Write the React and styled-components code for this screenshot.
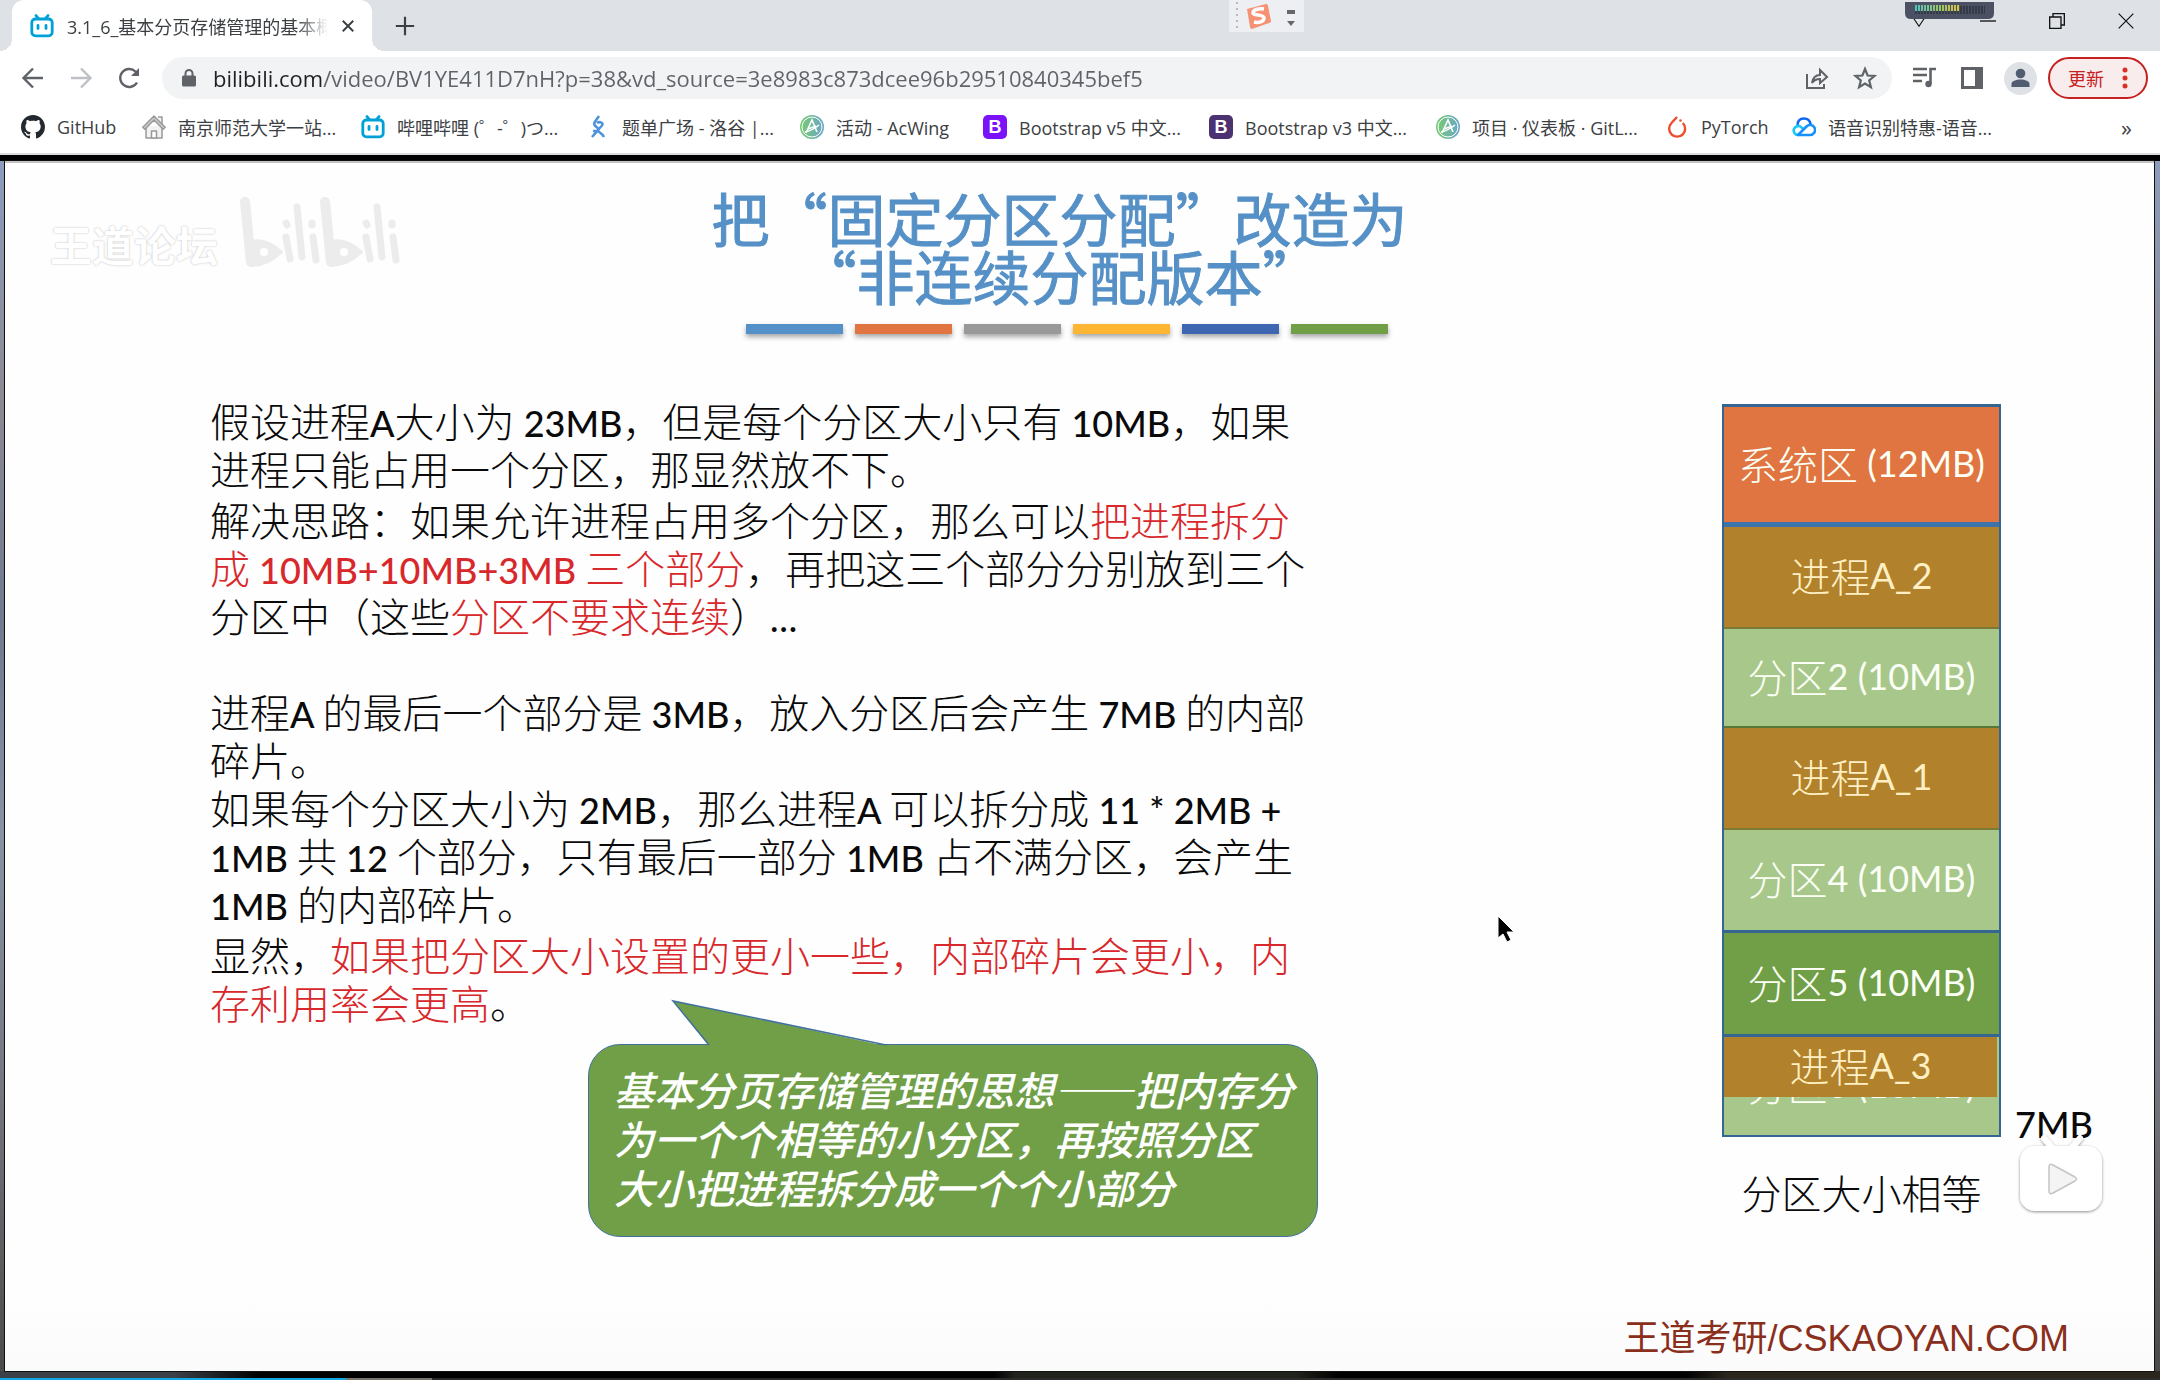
import React from "react";
import styled, { createGlobalStyle } from "styled-components";

const GlobalStyle = createGlobalStyle`
  *, *::before, *::after { box-sizing: border-box; }
  body { margin: 0; background: #000; }
  button { border: 0; padding: 0; background: none; color: inherit; font: inherit; cursor: pointer; }
`;

const uiFont = `"Open Sans", "Noto Sans CJK SC", sans-serif`;
const slideFont = `"Noto Sans CJK SC", sans-serif`;

const Page = styled.div`
  min-height: 100vh;
  display: flex;
  flex-direction: column;
  font-family: ${uiFont};
  font-size: 18px;
  color: #3c4043;
`;

/* ---------- tab strip ---------- */

const TabStrip = styled.header`
  position: relative;
  display: flex;
  align-items: stretch;
  height: 51px;
  padding-left: 12px;
  background: #dee1e6;
`;

const Tab = styled.div`
  position: relative;
  display: flex;
  align-items: center;
  width: 360px;
  padding: 0 12px 0 18px;
  background: #fff;
  border-radius: 12px 12px 0 0;
  &::before, &::after {
    content: "";
    position: absolute;
    bottom: 0;
    width: 12px;
    height: 12px;
  }
  &::before { left: -12px; background: radial-gradient(circle at 0 0, transparent 12px, #fff 12px); }
  &::after { right: -12px; background: radial-gradient(circle at 100% 0, transparent 12px, #fff 12px); }
`;

const TabTitle = styled.span`
  flex: 1;
  margin: 0 8px 0 13px;
  overflow: hidden;
  white-space: nowrap;
  mask-image: linear-gradient(90deg, #000 88%, transparent);
`;

const IconButton = styled.button`
  display: flex;
  align-items: center;
  justify-content: center;
  width: ${(p) => p.$w || 48}px;
  height: 100%;
  color: ${(p) => p.$color || "#5f6368"};
`;

const NewTab = styled(IconButton)`
  margin-left: 9px;
`;

const WindowButtons = styled.div`
  display: flex;
  height: 42px;
  margin-left: auto;
`;

const ImeBar = styled.div`
  position: absolute;
  top: 0;
  left: 1229px;
  display: flex;
  align-items: center;
  width: 75px;
  height: 32px;
  background: #eeeff3;
`;

const Meter = styled.div`
  position: absolute;
  top: 0;
  right: 166px;
  height: 16px;
`;

/* ---------- toolbar ---------- */

const Toolbar = styled.div`
  display: flex;
  align-items: center;
  height: 54px;
  padding: 0 12px 0 9px;
  background: #fff;
`;

const AddressBar = styled.label`
  flex: 1;
  display: flex;
  align-items: center;
  height: 42px;
  margin: 0 8px 0 9px;
  padding: 0 3px 0 20px;
  background: #f1f3f4;
  border-radius: 21px;
`;

const AddressInput = styled.input`
  flex: 1;
  min-width: 0;
  margin-left: 17px;
  padding: 0;
  border: 0;
  outline: 0;
  font: 22px/32px ${uiFont};
  color: #5f6368;
  background: linear-gradient(90deg, #202124 110px, #5f6368 110px);
  background-clip: text;
  -webkit-background-clip: text;
  -webkit-text-fill-color: transparent;
`;

const Update = styled.button`
  display: flex;
  align-items: center;
  justify-content: space-between;
  width: 100px;
  height: 42px;
  margin-left: 4px;
  padding: 0 18px;
  border: 2px solid #c5221f;
  border-radius: 21px;
  background: #f9ecec;
  color: #c5221f;
`;

/* ---------- bookmarks ---------- */

const Bookmarks = styled.nav`
  display: flex;
  align-items: center;
  height: 50px;
  padding: 0 28px 4px 21px;
  background: #fff;
  border-bottom: 2px solid #dadce0;
`;

const Bookmark = styled.a`
  display: flex;
  align-items: center;
  flex: none;
  gap: 12px;
  width: ${(p) => p.$w}px;
  color: #3c4043;
  text-decoration: none;
  white-space: nowrap;
`;

const More = styled.button`
  margin-left: auto;
  font-size: 22px;
  line-height: 24px;
`;

/* ---------- video ---------- */

const Video = styled.main`
  flex: 1;
  display: flex;
  flex-direction: column;
  padding: 6px 6px 0 5px;
  background:
    linear-gradient(#000, #000) top / 100% 6px no-repeat,
    linear-gradient(90deg, #3c4148 0 8%, #000 12% 46%, #20221c 47% 60%, #000 62% 78%, #2b261d 80%) bottom / 100% 9px no-repeat,
    linear-gradient(#8c9dbd, #8b8a92 20%, #707a90 38%, #8793a3 55%, #777982 75%, #4a4a48) 0 0 / 100% 100% no-repeat;
`;

const Slide = styled.section`
  flex: 1;
  display: flex;
  flex-direction: column;
  padding: 25px 85px 12px 45px;
  border-top: 2px solid #c4c4c4;
  background: linear-gradient(#fefefe 94%, #fbfbfc);
  box-shadow: 0 0 0 1px #111;
  font-family: ${slideFont};
  font-size: 40px;
  font-weight: 300;
  line-height: 48px;
  color: #0a0a0a;
`;

const Progress = styled.div`
  height: 9px;
  border-top: 7px solid transparent;
  margin: 0 -6px 0 -5px;
  background: linear-gradient(90deg, #12a8e4 16%, #77746f 16% 20%, #2b2b2b 20%) padding-box;
`;

const SlideHead = styled.div`
  display: grid;
  grid-template-columns: 1fr auto 1fr;
`;

const Watermark = styled.div`
  display: flex;
  align-items: flex-end;
  gap: 20px;
  height: 80px;
  color: #fff;
  font-size: 42px;
  font-weight: 700;
  text-shadow: 0 0 2px #b4b4b4;
`;

const Title = styled.h1`
  margin: 0;
  font-size: 58px;
  font-weight: 400;
  line-height: 58px;
  text-align: center;
  color: #5590c6;
  -webkit-text-stroke: 1px #5590c6;
`;

const Bars = styled.div`
  display: grid;
  grid-template-columns: repeat(6, 1fr);
  gap: 12px;
  margin: 20px 20px 0 35px;
`;

const Bar = styled.span`
  height: 10px;
  background: ${(p) => p.$color};
  box-shadow: 0 3px 5px rgba(0, 0, 0, 0.35);
`;

const SlideBody = styled.div`
  display: flex;
  justify-content: space-between;
  margin: 62px -20px 0 160px;
`;

const Prose = styled.div`
  white-space: nowrap;
`;

const Para = styled.p`
  margin: ${(p) => p.$gap || 0}px 0 0;
`;

const Mark = styled.em`
  font-style: normal;
  color: #d8282b;
`;

const Latin = styled.span`
  font-family: Lato, ${slideFont};
  font-size: 36px;
  font-weight: ${(p) => p.$weight || 500};
  line-height: 36px;
  white-space: pre;
`;

const Callout = styled.aside`
  position: relative;
  width: 730px;
  margin: 18px 0 0 378px;
  padding: 20px 25px 24px;
  border: 1px solid #41719c;
  border-radius: 32px;
  background: #709f47;
  color: #fff;
  font-style: italic;
  font-weight: 500;
  line-height: 49px;
`;

const Tail = styled.svg`
  position: absolute;
  left: 82px;
  top: -46px;
`;

const Memory = styled.div`
  display: flex;
  align-items: flex-start;
  gap: 14px;
  padding-top: 8px;
`;

const Figure = styled.figure`
  width: 279px;
  margin: 0;
  text-align: center;
`;

const Stack = styled.div`
  border: 2px solid #356691;
  border-top-width: 3px;
`;

const Block = styled.div`
  position: relative;
  display: flex;
  align-items: center;
  justify-content: center;
  height: ${(p) => p.$h}px;
  padding-bottom: 4px;
  border-bottom: ${(p) => p.$line || 2}px solid ${(p) => p.$edge || "#356691"};
  background: ${(p) => p.$fill};
  color: ${(p) => p.$ink || "#fbfff5"};
  white-space: pre;
  &:last-child { border-bottom: 0; }
`;

const Cover = styled(Block)`
  position: absolute;
  inset: 0 2px auto 0;
`;

const Caption = styled.figcaption`
  padding-top: 31px;
`;

const Free = styled.div`
  width: 74px;
  padding-top: 693px;
`;

const Credit = styled.footer`
  margin-top: auto;
  font: 36px/40px "Liberation Sans", "Noto Sans CJK SC", sans-serif;
  text-align: right;
  color: #8a2f1c;
`;

const PlayBadge = styled.button`
  position: absolute;
  right: 53px;
  bottom: 159px;
`;

const Pointer = styled.svg`
  position: absolute;
  left: 1497px;
  top: 915px;
`;

/* ---------- drawings ---------- */

const BiliIcon = () => (
  <svg width="24" height="24" viewBox="0 0 24 24" fill="none" stroke="#00a1d6" strokeWidth="2.8" strokeLinecap="round" aria-hidden="true">
    <rect x="1.8" y="5" width="20.4" height="16.8" rx="3.6" />
    <path d="M6 1.6 8.4 4.4M18 1.6 15.6 4.4M8 11.5v3M16 11.5v3" />
  </svg>
);

const GithubIcon = () => (
  <svg width="24" height="24" viewBox="0 0 16 16" fill="#24292f" aria-hidden="true">
    <path d="M8 0C3.58 0 0 3.58 0 8c0 3.54 2.29 6.53 5.47 7.59.4.07.55-.17.55-.38 0-.19-.01-.82-.01-1.49-2.01.37-2.53-.49-2.69-.94-.09-.23-.48-.94-.82-1.13-.28-.15-.68-.52-.01-.53.63-.01 1.08.58 1.23.82.72 1.21 1.87.87 2.33.66.07-.52.28-.87.51-1.07-1.78-.2-3.64-.89-3.64-3.95 0-.87.31-1.59.82-2.15-.08-.2-.36-1.02.08-2.12 0 0 .67-.21 2.2.82.64-.18 1.32-.27 2-.27s1.36.09 2 .27c1.53-1.04 2.2-.82 2.2-.82.44 1.1.16 1.92.08 2.12.51.56.82 1.27.82 2.15 0 3.07-1.87 3.75-3.65 3.95.29.25.54.73.54 1.48 0 1.07-.01 1.93-.01 2.2 0 .21.15.46.55.38A8.01 8.01 0 0 0 16 8c0-4.42-3.58-8-8-8z" />
  </svg>
);

const HomeIcon = () => (
  <svg width="24" height="24" viewBox="0 0 24 24" fill="#f2f2f2" stroke="#999" strokeWidth="1.5" strokeLinejoin="round" aria-hidden="true">
    <path d="M16 2h4v7M4 11v12h16V11" />
    <path d="M12 1 .8 12.2l2 2L12 5l9.200 9.200 2-2z" fill="#ccc" />
    <path d="M9.500 23v-7h5v7z" fill="#fff" />
  </svg>
);

const LuoguIcon = () => (
  <svg width="22" height="24" viewBox="0 0 22 24" fill="none" stroke="#4f94dc" strokeWidth="2.600" aria-hidden="true">
    <path d="M11 1 6.500 7.500c-1 2 0 3 2 4.500 2.500 2 2 3 0 5L4 22M9 8c3-2 7 0 5 2.500L10 15c1 4 4 2 6 7M5 16h6" />
  </svg>
);

const AcwingIcon = ({ id }) => (
  <svg width="24" height="24" viewBox="0 0 24 24" aria-hidden="true">
    <defs>
      <linearGradient id={id}><stop stopColor="#77cc70" /><stop offset="1" stopColor="#6ba5cb" /></linearGradient>
    </defs>
    <circle cx="12" cy="12" r="12" fill={`url(#${id})`} />
    <circle cx="12" cy="12" r="10" fill="none" stroke="#fff" />
    <path d="m6 18 6-13 5 12M8 14l8-3M5 17c5-1 9-3 14-7" fill="none" stroke="#fff" strokeWidth="1.600" />
  </svg>
);

const BootBadge = styled.span`
  display: grid;
  place-items: center;
  width: 24px;
  height: 24px;
  border-radius: 5px;
  background: ${(p) => p.$color};
  color: #fff;
  font: 700 18px/24px "Liberation Sans", sans-serif;
`;

const TorchIcon = () => (
  <svg width="24" height="24" viewBox="0 0 24 24" fill="none" stroke="#ee4c2c" strokeWidth="2.400" aria-hidden="true">
    <path d="M12 2 6.500 8a8 8 0 1 0 11.300 0" />
    <circle cx="15.500" cy="5.500" r="1.300" fill="#ee4c2c" stroke="none" />
  </svg>
);

const CloudIcon = () => (
  <svg width="24" height="24" viewBox="0 0 24 24" fill="none" strokeWidth="2.600" strokeLinecap="round" aria-hidden="true">
    <path d="M5.500 11C5 6 8 3.500 12 3.500S18 6 18.500 9" stroke="#0a68f5" />
    <path d="M6 20a4.500 4.500 0 1 1 3-8l2.500 2" stroke="#19c8f0" />
    <path d="M6 20h12a5 5 0 1 0-3.500-8.500z" stroke="#1690fb" strokeLinejoin="round" />
  </svg>
);

const BiliLogo = () => (
  <svg width="166" height="72" viewBox="0 0 166 72" fill="none" stroke="#ececec" strokeLinecap="round" aria-label="bilibili">
    {[0, 80].map((x) => (
      <g key={x} transform={`translate(${x} 0)`}>
        <path d="m7 6 6 60" strokeWidth="10" />
        <path d="M12 45c14-3 24 3 32 11-8 8-18 14-32 14z" fill="#ececec" strokeWidth="2" />
        <circle cx="26" cy="56" r="4" fill="#fefefe" stroke="none" />
        <path d="m48 27 1 2m-1 12 4 22m7-52 5 50m10-34v2m1 12 3 23" strokeWidth="7" />
      </g>
    ))}
  </svg>
);

const Glyph = ({ size = 24, width = 2.4, children, ...rest }) => (
  <svg width={size} height={size} viewBox="0 0 24 24" fill="none" stroke="currentColor" strokeWidth={width} aria-hidden="true" {...rest}>
    {children}
  </svg>
);

const bookmarks = [
  { label: "GitHub", w: 121, icon: <GithubIcon /> },
  { label: "南京师范大学一站...", w: 219, icon: <HomeIcon /> },
  { label: "哔哩哔哩 (゜-゜)つ...", w: 227, icon: <BiliIcon /> },
  { label: "题单广场 - 洛谷 |...", w: 212, icon: <LuoguIcon /> },
  { label: "活动 - AcWing", w: 183, icon: <AcwingIcon id="ac1" /> },
  { label: "Bootstrap v5 中文...", w: 226, icon: <BootBadge $color="#7a12fa">B</BootBadge> },
  { label: "Bootstrap v3 中文...", w: 227, icon: <BootBadge $color="#4c3271">B</BootBadge> },
  { label: "项目 · 仪表板 · GitL...", w: 229, icon: <AcwingIcon id="ac2" /> },
  { label: "PyTorch", w: 127, icon: <TorchIcon /> },
  { label: "语音识别特惠-语音...", w: 210, icon: <CloudIcon /> },
];

const barColors = ["#5591c9", "#e07541", "#999999", "#fdb634", "#3f66b1", "#709f47"];

/* Latin runs are set in a second face, a little smaller than the Chinese text. */
const mix = (text, weight) =>
  text.split(/([A-Za-z0-9()_+*… ]+)/).map((run, i) =>
    i % 2 ? <Latin key={i} $weight={weight}>{run}</Latin> : run
  );

const brown = "#b1812b";
const pale = "#a8c78a";

export default function App() {
  return (
    <Page lang="zh-CN">
      <GlobalStyle />
      <TabStrip>
        <Tab>
          <BiliIcon />
          <TabTitle>3.1_6_基本分页存储管理的基本概念</TabTitle>
          <IconButton $w={24} $color="#3c4043" aria-label="关闭标签页">
            <Glyph size={18} width={2.6}><path d="m5 5 14 14M19 5 5 19" /></Glyph>
          </IconButton>
        </Tab>
        <NewTab $color="#3c4043" aria-label="新标签页">
          <Glyph size={22}><path d="M12 2v20M2 12h20" /></Glyph>
        </NewTab>
        <WindowButtons>
          <IconButton $w={69} $color="#111" aria-label="搜索标签页"><Glyph size={16} width={1.6}><path d="m2 5 10 15L22 5z" /></Glyph></IconButton>
          <IconButton $w={69} $color="#111" aria-label="最小化"><Glyph size={16} width={2}><path d="M0 12h24" /></Glyph></IconButton>
          <IconButton $w={69} $color="#111" aria-label="还原"><Glyph size={16} width={2}><path d="M1 6h17v17H1zM6 6V1h17v17h-5" /></Glyph></IconButton>
          <IconButton $w={69} $color="#111" aria-label="关闭"><Glyph size={16} width={1.8}><path d="m1 1 22 22M23 1 1 23" /></Glyph></IconButton>
        </WindowButtons>
        <ImeBar>
          <svg width="75" height="32" viewBox="0 0 75 32" aria-hidden="true">
            <path d="M8 2v30" stroke="#b9bbc0" strokeWidth="2" strokeDasharray="2 4" />
            <path d="m18 9 19-5q2 0 2 2l3 15q0 2-2 2l-17 6q-2 0-2-2L18 9z" fill="#f59274" />
            <path d="M35 9c-6-1-11 1-11 4s11 1 11 5-6 5-10 4" fill="none" stroke="#fff" strokeWidth="3.500" />
            <path d="M58 10h8v4h-8zM58 21h8l-4 5z" fill="#66686c" />
          </svg>
        </ImeBar>
        <Meter>
          <svg width="89" height="17" viewBox="0 0 89 17" aria-hidden="true">
            <defs>
              <linearGradient id="level"><stop stopColor="#4fc3c0" /><stop offset=".5" stopColor="#8fc66c" /><stop offset="1" stopColor="#e0c23e" /></linearGradient>
            </defs>
            <path d="M0 0h89v11q0 6-6 6H6q-6 0-6-6z" fill="#4b5163" />
            <path d="M10 8h70" stroke="#343a48" strokeWidth="8" strokeDasharray="2 1" />
            <rect x="10" y="3" width="45" height="6" fill="url(#level)" />
            <path d="M12 6h43" stroke="#4b5163" strokeWidth="6" strokeDasharray="1 2" />
          </svg>
        </Meter>
      </TabStrip>

      <Toolbar>
        <IconButton aria-label="后退"><Glyph><path d="M22 12H3M12 2.500 2.500 12l9.500 9.500" /></Glyph></IconButton>
        <IconButton $color="#bdc1c6" aria-label="前进"><Glyph><path d="M2 12h19M12 2.500l9.500 9.500-9.500 9.500" /></Glyph></IconButton>
        <IconButton aria-label="重新加载">
          <Glyph><path d="M20 16.500a9 9 0 1 1-1.500-11L21 8" /><path d="M22 2v8h-8z" fill="currentColor" stroke="none" /></Glyph>
        </IconButton>
        <AddressBar>
          <svg width="14" height="18" viewBox="0 0 14 18" aria-hidden="true">
            <path d="M3.500 7V4.500a3.500 3.500 0 0 1 7 0V7" fill="none" stroke="#5f6368" strokeWidth="2" />
            <rect y="6.500" width="14" height="11" rx="1.500" fill="#5f6368" />
          </svg>
          <AddressInput aria-label="地址" defaultValue="bilibili.com/video/BV1YE411D7nH?p=38&vd_source=3e8983c873dcee96b29510840345bef5" />
          <IconButton aria-label="分享"><Glyph width={2}><path d="M2 8v14h17v-4M7 17c1-6 4-8 8-8V4l7 7-7 6v-4c-4 0-6 1-8 4z" /></Glyph></IconButton>
          <IconButton aria-label="收藏"><Glyph width={2.2}><path d="m12 3 2.600 6.500 6.900.500-5.300 4.400 1.700 6.800L12 17.500l-5.900 3.700 1.700-6.800L2.500 10l6.900-.500z" /></Glyph></IconButton>
        </AddressBar>
        <IconButton aria-label="媒体控件">
          <Glyph width={2.6}><path d="M1 3h14M1 9h14M1 15h9M18.500 18V3H24" /><circle cx="16.500" cy="18" r="3.200" fill="currentColor" stroke="none" /></Glyph>
        </IconButton>
        <IconButton aria-label="侧边栏">
          <Glyph width={3}><path d="M2.500 2.500h19v19h-19z" /><path d="M15 2h7v20h-7z" fill="currentColor" stroke="none" /></Glyph>
        </IconButton>
        <IconButton aria-label="用户">
          <svg width="33" height="33" viewBox="0 0 33 33" aria-hidden="true">
            <circle cx="16.500" cy="16.500" r="16.500" fill="#dee1e6" />
            <circle cx="16.500" cy="11.500" r="4.800" fill="#515c70" />
            <path d="M7.500 25v-3c0-6 18-6 18 0v3z" fill="#515c70" />
          </svg>
        </IconButton>
        <Update>
          更新
          <svg width="6" height="22" viewBox="0 0 6 22" fill="#d93025" aria-hidden="true">
            <circle cx="3" cy="3" r="2.500" /><circle cx="3" cy="11" r="2.500" /><circle cx="3" cy="19" r="2.500" />
          </svg>
        </Update>
      </Toolbar>

      <Bookmarks>
        {bookmarks.map((b) => (
          <Bookmark key={b.label} href="#" $w={b.w}>{b.icon}{b.label}</Bookmark>
        ))}
        <More aria-label="更多书签">»</More>
      </Bookmarks>

      <Video>
        <Slide>
          <SlideHead>
            <Watermark>
              王道论坛
              <BiliLogo />
            </Watermark>
            <div>
              <Title>把“固定分区分配”改造为<br />“非连续分配版本”</Title>
              <Bars>{barColors.map((c) => <Bar key={c} $color={c} />)}</Bars>
            </div>
          </SlideHead>

          <SlideBody>
            <Prose>
              <Para>
                {mix("假设进程A大小为 23MB，但是每个分区大小只有 10MB，如果")}<br />
                进程只能占用一个分区，那显然放不下。
              </Para>
              <Para $gap={3}>
                解决思路：如果允许进程占用多个分区，那么可以<Mark>把进程拆分<br />
                {mix("成 10MB+10MB+3MB 三个部分")}</Mark>，再把这三个部分分别放到三个<br />
                分区中（这些<Mark>分区不要求连续</Mark>{mix("）…")}
              </Para>
              <Para $gap={48}>
                {mix("进程A 的最后一个部分是 3MB，放入分区后会产生 7MB 的内部")}<br />
                碎片。
              </Para>
              <Para>
                {mix("如果每个分区大小为 2MB，那么进程A 可以拆分成 11 * 2MB +")}<br />
                {mix("1MB 共 12 个部分，只有最后一部分 1MB 占不满分区，会产生")}<br />
                {mix("1MB 的内部碎片。")}
              </Para>
              <Para $gap={3}>
                显然，<Mark>如果把分区大小设置的更小一些，内部碎片会更小，内<br />
                存利用率会更高</Mark>。
              </Para>
              <Callout>
                <Tail width="222" height="48" viewBox="0 0 222 48" aria-hidden="true">
                  <path d="M39 48 2 2l218 46z" fill="#709f47" />
                  <path d="M38 46 2 2l213 44" fill="none" stroke="#41719c" strokeWidth="1.500" />
                </Tail>
                基本分页存储管理的思想——把内存分<br />
                为一个个相等的小分区，再按照分区<br />
                大小把进程拆分成一个个小部分
              </Callout>
            </Prose>

            <Memory>
              <Figure>
                <Stack>
                  <Block $h={120} $line={5} $fill="#e07541" $edge="#3b73aa">{mix("系统区 (12MB)", 400)}</Block>
                  <Block $h={102} $fill={brown} $edge="#7d7a35" $ink="#fff0c4">{mix("进程A_2", 400)}</Block>
                  <Block $h={99} $fill={pale} $edge="#587838">{mix("分区2 (10MB)", 400)}</Block>
                  <Block $h={102} $fill={brown} $edge="#7d7a35" $ink="#fff0c4">{mix("进程A_1", 400)}</Block>
                  <Block $h={103} $line={3} $fill={pale}>{mix("分区4 (10MB)", 400)}</Block>
                  <Block $h={104} $line={3} $fill="#709f47">{mix("分区5 (10MB)", 400)}</Block>
                  <Block $h={98} $fill={pale}>
                    {mix("分区6 (10MB)", 400)}
                    <Cover $h={60} $fill={brown} $ink="#fff0c4">{mix("进程A_3", 400)}</Cover>
                  </Block>
                </Stack>
                <Caption>分区大小相等</Caption>
              </Figure>
              <Free>{mix("7MB")}</Free>
            </Memory>
          </SlideBody>
          <Credit>王道考研/CSKAOYAN.COM</Credit>
        </Slide>
        <Progress />
      </Video>

      <PlayBadge aria-label="播放">
        <svg width="92" height="84" viewBox="0 0 92 84" aria-hidden="true">
          <defs>
            <filter id="soft" x="-20%" y="-20%" width="140%" height="140%"><feDropShadow dx="0" dy="1" stdDeviation="1.500" floodOpacity=".45" /></filter>
          </defs>
          <g filter="url(#soft)">
            <path d="m29 6 9 11M65 6l-9 11" stroke="#fff" strokeWidth="6" strokeLinecap="round" />
            <rect x="5" y="14" width="82" height="65" rx="15" fill="#fff" />
          </g>
          <path d="M34 35q0-4 4-2l22 12q3 2 0 4L38 61q-4 2-4-2z" fill="#f4f4f4" stroke="#c4c4c4" strokeWidth="1.500" />
        </svg>
      </PlayBadge>
      <Pointer width="18" height="28" viewBox="0 0 18 28" aria-hidden="true">
        <path d="M1 1v22l5-4 4 8 4-2-4-8h7z" fill="#000" stroke="#fff" />
      </Pointer>
    </Page>
  );
}
